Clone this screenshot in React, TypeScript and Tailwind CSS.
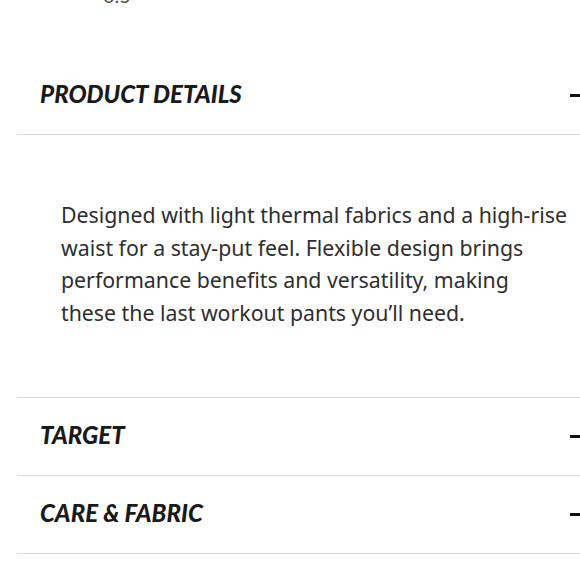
import React from 'react';

const sections = [
  {
    title: 'PRODUCT DETAILS',
    body: 'Designed with light thermal fabrics and a high-rise waist for a stay-put feel. Flexible design brings performance benefits and versatility, making these the last workout pants you’ll need.',
  },
  { title: 'TARGET' },
  { title: 'CARE & FABRIC' },
];

const Header: React.FC<{ title: string }> = ({ title }) => (
  <div className="flex h-[77px] items-center justify-between pl-[23px] pr-[16px]">
    <h3 className="-mt-[3px] font-['Lato',sans-serif] text-[24px] font-black italic text-[#1a1a1a]">
      {title}
    </h3>
    <span className="block h-[3px] w-[14px] bg-[#111]" />
  </div>
);

export default function App() {
  return (
    <div className="h-[580px] w-[580px] overflow-hidden bg-white">
      <div className="w-[600px] pl-[17px]">
        <div className="-mt-[15px] h-[72px] pl-[86px] font-['Lato',sans-serif] text-[20px] leading-[20px] text-[#555]">
          0.5
        </div>
        {sections.map((s) => (
          <div key={s.title} className="border-b border-[#d3dadd]">
            <Header title={s.title} />
            {s.body && (
              <div className="border-t border-[#d3dadd] pb-[68px] pl-[44px] pr-[30px] pt-[64px]">
                <p className="w-[508px] font-['Noto_Sans',sans-serif] text-[21.3px] leading-[32.5px] text-[#2e2e2e]">
                  {s.body}
                </p>
              </div>
            )}
          </div>
        ))}
      </div>
    </div>
  );
}
